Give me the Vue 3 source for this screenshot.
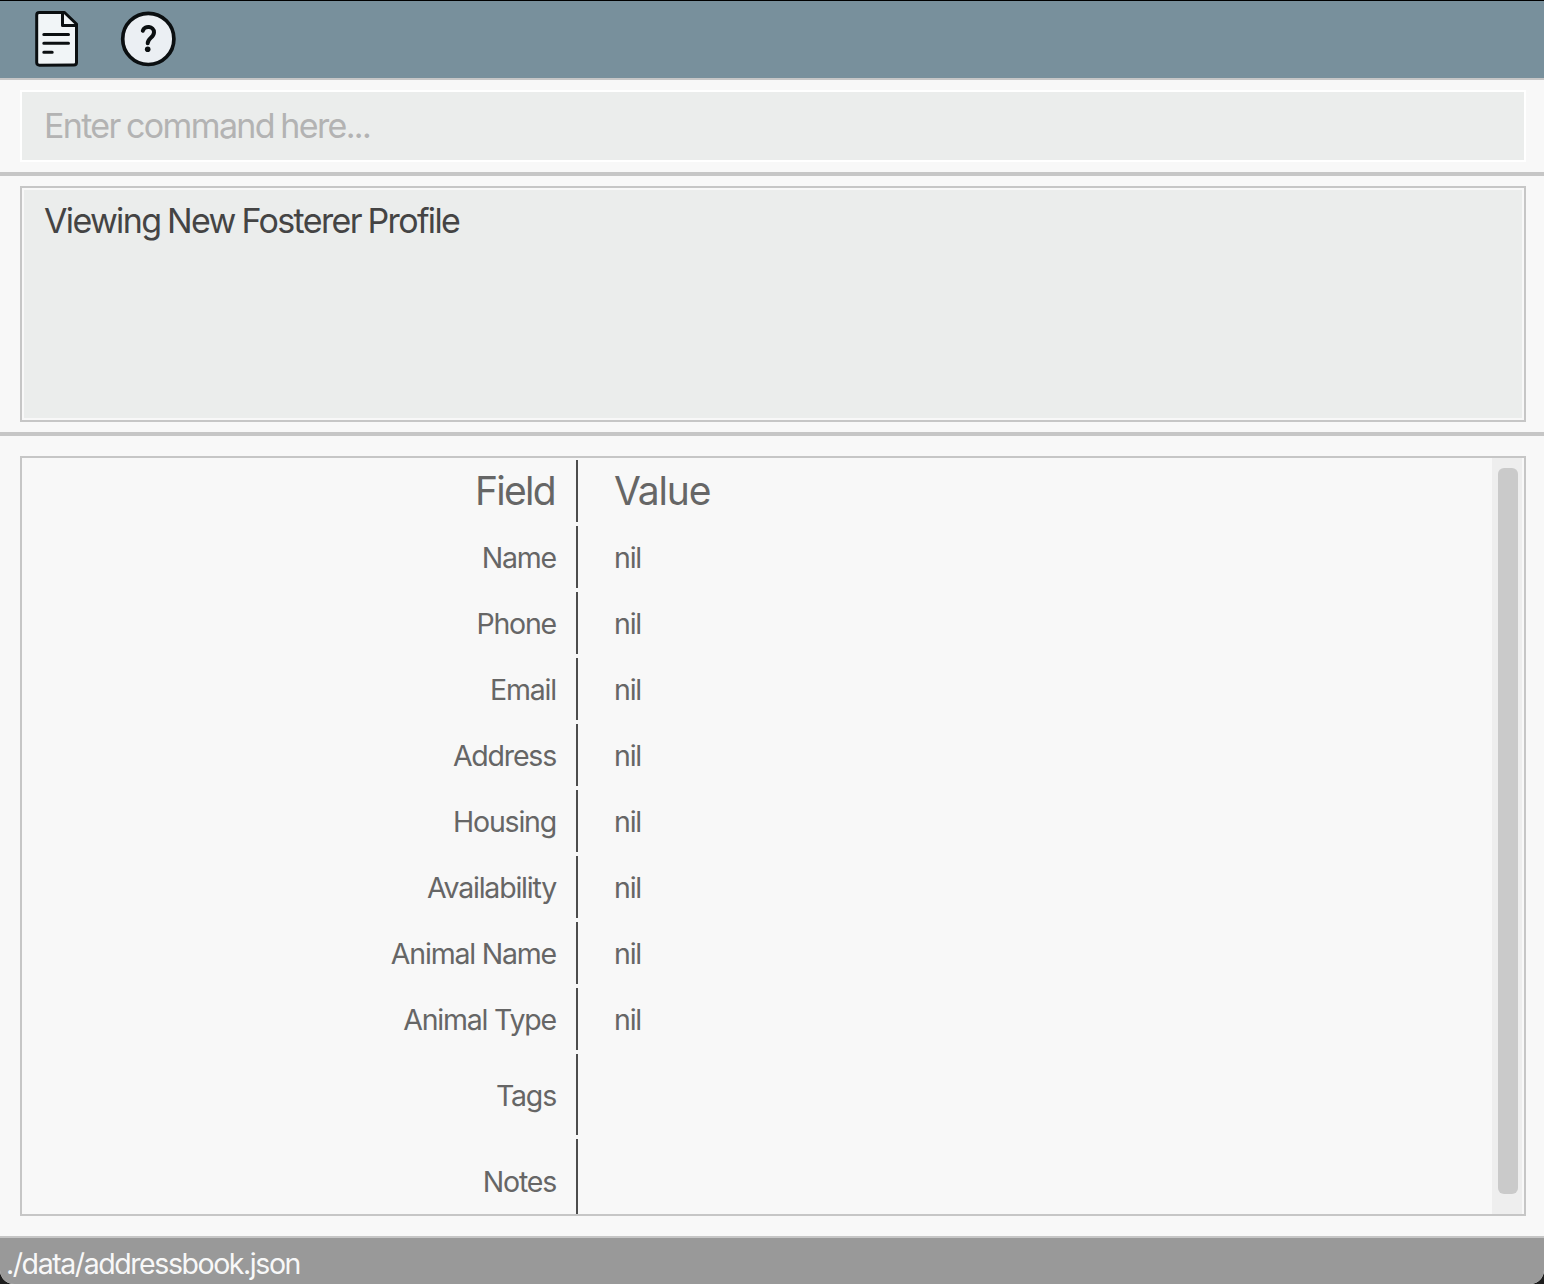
<script setup>
const rows = [
  { field: 'Name', value: 'nil' },
  { field: 'Phone', value: 'nil' },
  { field: 'Email', value: 'nil' },
  { field: 'Address', value: 'nil' },
  { field: 'Housing', value: 'nil' },
  { field: 'Availability', value: 'nil' },
  { field: 'Animal Name', value: 'nil' },
  { field: 'Animal Type', value: 'nil' },
  { field: 'Tags', value: '', kind: 'tags' },
  { field: 'Notes', value: '', kind: 'notes' },
]
</script>

<template>
  <div class="window">
    <header class="menu">
      <svg class="icon-doc" width="46" height="60" viewBox="0 0 46 60">
        <path d="M6.200 2.500H31.500L43.500 14V52.500Q43.500 55 41 55L6.500 55.200Q3.700 55.200 3.700 52.500V5Q3.700 2.500 6.200 2.500Z" fill="#f1f5f7" />
        <path d="M29.500 2.500V15.500H43.500" />
        <path d="M10.800 24.400H35.500M10.800 33.300H35.500M10.800 42.300H19.200" />
      </svg>
      <svg class="icon-help" width="56" height="56" viewBox="0 0 56 56">
        <circle class="ring" cx="28.300" cy="27.900" r="25.600" fill="#ebeff3" />
        <path class="mark" d="M22.800 19.800C24.200 14.300 34.200 14.800 34 21.400C33.800 27 27.800 26.500 27.700 32.300" />
        <circle cx="27.700" cy="38.300" r="2.800" class="dot" />
      </svg>
    </header>
    <section class="command"><div class="input">Enter command here...</div></section>
    <section class="result"><div class="result-box"><p>Viewing New Fosterer Profile</p></div></section>
    <main class="content">
      <div class="panel">
        <div class="table">
          <div class="row head"><div class="field">Field</div><div class="value">Value</div></div>
          <div v-for="row in rows" :key="row.field" class="row" :class="row.kind">
            <div class="field">{{ row.field }}</div>
            <div class="value">{{ row.value }}</div>
          </div>
        </div>
        <div class="track"><div class="thumb"></div></div>
      </div>
    </main>
    <footer class="status"><span>./data/addressbook.json</span></footer>
  </div>
</template>

<style>
body { background: #1d1d1d; }
</style>

<style scoped>
* { box-sizing: border-box; }
.window {
  width: 1544px; height: 1284px; display: flex; flex-direction: column;
  background: #f8f8f8; overflow: hidden; border-radius: 0 0 14px 14px;
  font-family: Inter, "Liberation Sans", sans-serif;
}
.menu {
  height: 80px; display: flex; align-items: flex-start; padding: 9px 0 0 33px; gap: 41px;
  background: #78909c; border-top: 1px solid #000; border-bottom: 2px solid #c6c6c6;
}
.menu svg { display: block; flex: none; fill: none; stroke: #0b0f11; stroke-width: 3; stroke-linecap: round; stroke-linejoin: round; }
.icon-help { margin-top: 1px; }
.menu .ring { stroke-width: 3.700; }
.menu .mark { stroke-width: 4; }
.menu .dot { fill: #0b0f11; stroke: none; }
.command { height: 96px; padding: 10px 18px 10px 20px; border-bottom: 4px solid #c6c6c6; }
.input {
  height: 72px; padding-left: 22px; border: 2px solid #fff; background: #ebedec;
  color: #b3b3b3; font-size: 34px; line-height: 68px; letter-spacing: -1.65px; word-spacing: -1.5px; white-space: nowrap;
}
.result { height: 260px; padding: 10px 18px 10px 20px; border-bottom: 4px solid #c6c6c6; }
.result-box { height: 236px; padding: 2px; border: 2px solid #c6c6c6; }
.result-box p {
  margin: 0; height: 228px; padding: 10px 0 0 20px; background: #ebedec;
  color: #444; font-size: 34px; line-height: 42px; letter-spacing: -1.65px; word-spacing: -1.2px; white-space: nowrap;
}
.content { height: 800px; padding: 20px 18px 20px 20px; }
.panel { height: 760px; display: flex; padding-right: 2px; border: 2px solid #c6c6c6; overflow: hidden; }
.table { flex: 1; padding-top: 2px; display: flex; flex-direction: column; gap: 4px; }
.row { height: 62px; flex: none; display: flex; align-items: center; color: #666; font-size: 28.5px; letter-spacing: -1.2px; white-space: nowrap; }
.row.tags { height: 81px; }
.row.notes { height: 84px; }
.field { width: 556px; height: 100%; padding-right: 20px; display: flex; align-items: center; justify-content: flex-end; border-right: 2px solid #4d4d4d; }
.tags .field { padding-top: 2px; }
.value { padding-left: 36px; }
.row.head { font-size: 39px; letter-spacing: -1.15px; }
.head .field { padding-right: 21px; padding-bottom: 1px; letter-spacing: -1.7px; }
.head .value { padding-bottom: 1px; }
.track { width: 30px; padding: 10px 4px 0 6px; background: #eee; }
.thumb { height: 726px; border-radius: 6px; background: #cacaca; }
.status {
  height: 48px; padding-left: 6px; background: #999; border-top: 2px solid #c6c6c6;
  color: #f8f8f8; font-size: 28.5px; line-height: 51px; letter-spacing: -1.43px; white-space: nowrap;
}
</style>
